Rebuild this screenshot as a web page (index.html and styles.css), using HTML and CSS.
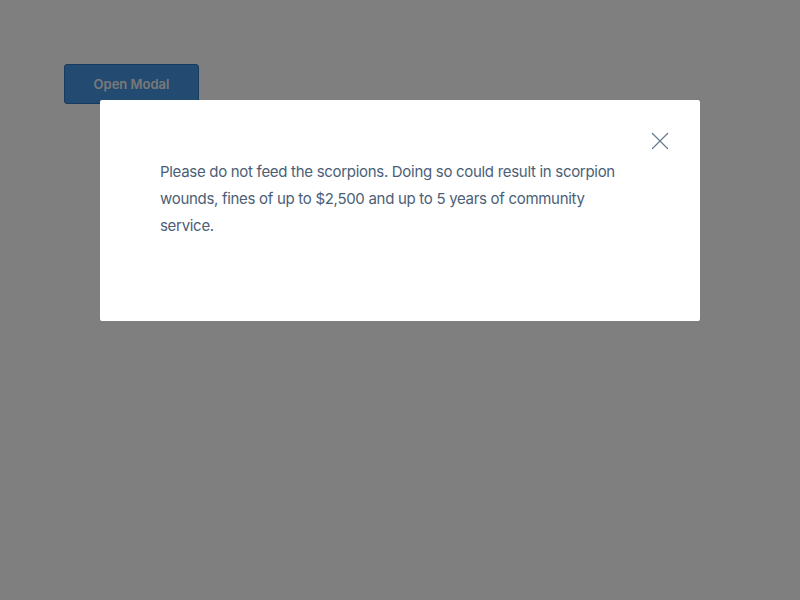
FILE: index.html
```html
<!DOCTYPE html>
<html>
<head>
<meta charset="utf-8">
<link rel="stylesheet" href="styles.css">
</head>
<body>
<div class="page">
  <button class="open-btn">Open Modal</button>
</div>
<div class="overlay"></div>
<div class="modal">
  <button class="close" aria-label="Close">
    <svg width="18" height="18" viewBox="0 0 18 18"><path d="M1 1L17 17M17 1L1 17" stroke="#62778f" stroke-width="1.1" fill="none"/></svg>
  </button>
  <p class="msg">Please do not feed the scorpions. Doing so could result in scorpion wounds, fines of up to $2,500 and up to 5 years of community service.</p>
</div>
</body>
</html>
```
FILE: styles.css
```css
html, body { margin: 0; padding: 0; height: 100%; }
body { background: #fff; font-family: Inter, "Noto Sans", sans-serif; }
.page { padding: 64px; }
.open-btn {
  width: 135px; height: 40px;
  background: #4694e2;
  border: 1px solid #2f76bf;
  border-radius: 3px;
  color: #f2f2f2;
  font-family: Inter, sans-serif;
  font-size: 13px;
  font-weight: 600;
}
.overlay { position: fixed; inset: 0; background: rgba(0,0,0,0.5); }
.modal {
  position: absolute; left: 100px; top: 100px;
  width: 600px; height: 221px; box-sizing: border-box;
  background: #fff; border-radius: 2px;
  padding: 58px 60px 0 60px;
}
.close {
  position: absolute; right: 31px; top: 32px;
  width: 18px; height: 18px; padding: 0; border: 0; background: none;
}
.close svg { display: block; }
.msg {
  margin: 0; max-width: 480px;
  font-size: 15px; line-height: 27px; color: #4b5e76;
  letter-spacing: -0.3px;
}
```
